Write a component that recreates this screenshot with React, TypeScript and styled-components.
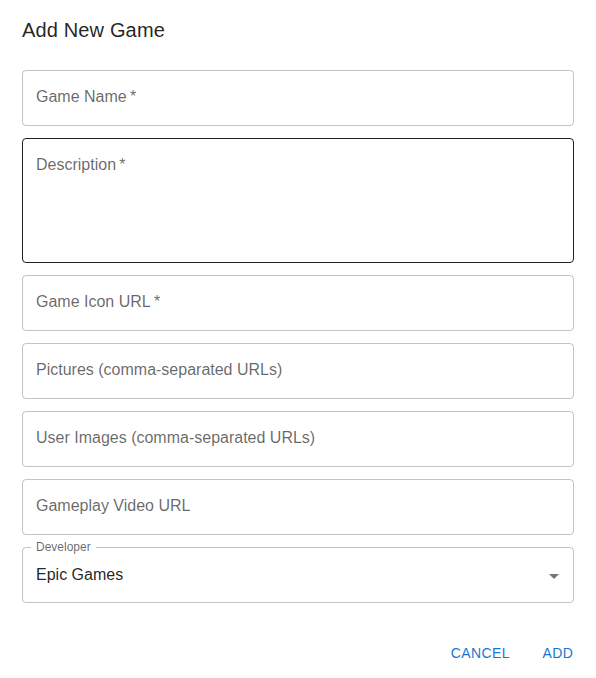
import React from 'react';
import styled, { createGlobalStyle } from 'styled-components';

const GlobalStyle = createGlobalStyle`
    html, body {
        margin: 0;
        padding: 0;
        background: #fff;
    }
    body {
        font-family: "Liberation Sans", Arial, sans-serif;
        color: rgba(0, 0, 0, 0.87);
    }
`;

const fields = [
    { label: 'Game Name', required: true, rows: 1 },
    { label: 'Description', required: true, rows: 4, active: true },
    { label: 'Game Icon URL', required: true, rows: 1 },
    { label: 'Pictures (comma-separated URLs)', rows: 1 },
    { label: 'User Images (comma-separated URLs)', rows: 1 },
    { label: 'Gameplay Video URL', rows: 1 },
];

const App = () => {
    return (
        <>
            <GlobalStyle />
            <Dialog>
                <Title>Add New Game</Title>
                <Content>
                    {fields.map((f) => (
                        <TextField key={f.label} $multiline={f.rows > 1} $active={!!f.active}>
                            <Label>
                                {f.label}
                                {f.required && <span>{'\u2009*'}</span>}
                            </Label>
                        </TextField>
                    ))}
                    <SelectField>
                        <Legend>Developer</Legend>
                        <SelectValue>Epic Games</SelectValue>
                        <Arrow viewBox="0 0 24 24">
                            <path d="M7 10l5 5 5-5z" />
                        </Arrow>
                    </SelectField>
                </Content>
                <Actions>
                    <TextButton>Cancel</TextButton>
                    <TextButton>Add</TextButton>
                </Actions>
            </Dialog>
        </>
    );
}

export default App;

const Dialog = styled.div`
    width: 596px;
    height: 678px;
    display: flex;
    flex-direction: column;
    background: #fff;
    box-sizing: border-box;
`;

const Title = styled.h2`
    margin: 0;
    padding: 14px 22px 16px;
    font-size: 20px;
    font-weight: 500;
    line-height: 32px;
    letter-spacing: 0.0075em;
    color: rgba(0, 0, 0, 0.87);
`;

const Content = styled.div`
    display: flex;
    flex-direction: column;
    gap: 12px;
    padding: 8px 22px 24px;
`;

const TextField = styled.div<{ $multiline: boolean; $active: boolean }>`
    box-sizing: border-box;
    height: ${(p) => (p.$multiline ? '125px' : '56px')};
    border: 1px solid ${(p) => (p.$active ? 'rgba(0, 0, 0, 0.87)' : 'rgba(0, 0, 0, 0.23)')};
    border-radius: 4px;
    padding: 14px 13px;
`;

const Label = styled.div`
    font-size: 16px;
    line-height: 23px;
    color: rgba(0, 0, 0, 0.6);
`;

const SelectField = styled.fieldset`
    position: relative;
    display: block;
    margin: -7px 0 0;
    min-width: 0;
    height: 63px;
    box-sizing: border-box;
    border: 1px solid rgba(0, 0, 0, 0.23);
    border-radius: 4px;
    padding: 0 8px;
`;

const Legend = styled.legend`
    font-size: 12px;
    line-height: 14px;
    padding: 0 5px;
    margin-left: 0;
    color: rgba(0, 0, 0, 0.6);
`;

const SelectValue = styled.div`
    padding: 0 5px;
    margin-top: 9px;
    font-size: 16px;
    line-height: 23px;
    color: rgba(0, 0, 0, 0.87);
`;

const Arrow = styled.svg`
    position: absolute;
    right: 7px;
    top: 10px;
    width: 24px;
    height: 24px;
    fill: rgba(0, 0, 0, 0.54);
`;

const Actions = styled.div`
    display: flex;
    justify-content: flex-end;
    gap: 8px;
    padding: 8px 6px;
`;

const TextButton = styled.button`
    min-width: 64px;
    height: 36px;
    padding: 6px 8px;
    border: none;
    background: none;
    border-radius: 4px;
    font-family: "Liberation Sans", Arial, sans-serif;
    font-size: 14px;
    font-weight: 500;
    letter-spacing: 0.02857em;
    text-transform: uppercase;
    color: #1976d2;
    cursor: pointer;
`;
